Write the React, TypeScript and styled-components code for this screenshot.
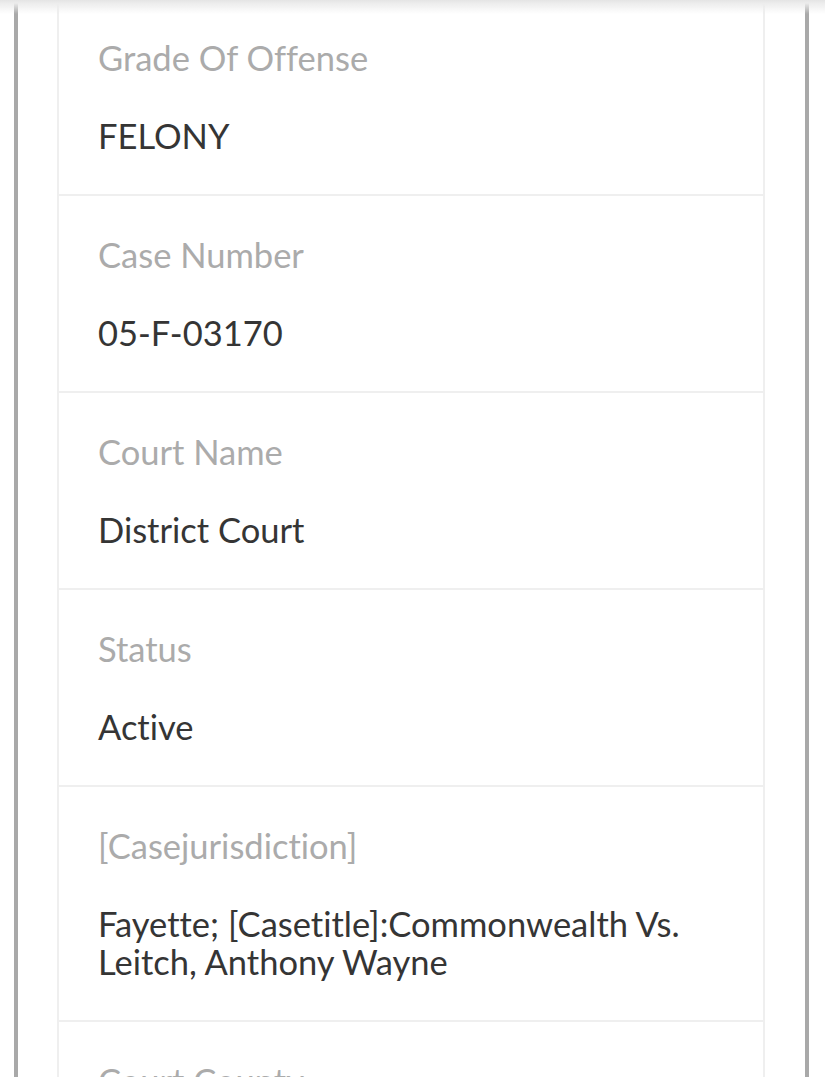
import React from "react";
import styled, { createGlobalStyle } from "styled-components";

const Global = createGlobalStyle`
  html, body {
    margin: 0;
    padding: 0;
    background: #ffffff;
  }
  body {
    font-family: Lato, "Open Sans", "Liberation Sans", sans-serif;
    font-variant-ligatures: none;
    font-feature-settings: "liga" 0, "clig" 0;
    -webkit-font-smoothing: antialiased;
  }
`;

const TopShadow = styled.div`
  position: fixed;
  top: 0;
  left: 0;
  right: 0;
  height: 14px;
  background: linear-gradient(
    to bottom,
    #e4e4e4 0px,
    #ececec 3px,
    rgba(255, 255, 255, 0) 14px
  );
  pointer-events: none;
  z-index: 2;
`;

const Frame = styled.div`
  margin: 0 16px 0 14px;
  padding: 0 40px 0 39px;
  border-left: 4px solid #a9a9a9;
  border-right: 4px solid #a9a9a9;
  min-height: 1200px;
`;

const Card = styled.div`
  margin-top: -1px;
  border-left: 2px solid #efefef;
  border-right: 2px solid #efefef;
  background: #fff;
`;

const Row = styled.div`
  padding: 40px 39px 39px;
  border-bottom: 2px solid #efefef;
  display: flex;
  flex-direction: column;
  gap: 40px;
`;

const Label = styled.div`
  font-size: 34.5px;
  line-height: 38px;
  color: #ababab;
  font-weight: 400;
`;

const Value = styled.div`
  font-size: 34.5px;
  line-height: 38px;
  color: #353535;
  font-weight: 400;
`;

const fields: { label: string; value: string }[] = [
  { label: "Grade Of Offense", value: "FELONY" },
  { label: "Case Number", value: "05-F-03170" },
  { label: "Court Name", value: "District Court" },
  { label: "Status", value: "Active" },
  {
    label: "[Casejurisdiction]",
    value: "Fayette; [Casetitle]:Commonwealth Vs. Leitch, Anthony Wayne",
  },
  { label: "Court County", value: "Fayette" },
];

export default function App() {
  return (
    <>
      <Global />
      <TopShadow />
      <Frame>
        <Card>
          {fields.map((f) => (
            <Row key={f.label}>
              <Label>{f.label}</Label>
              <Value>{f.value}</Value>
            </Row>
          ))}
        </Card>
      </Frame>
    </>
  );
}
